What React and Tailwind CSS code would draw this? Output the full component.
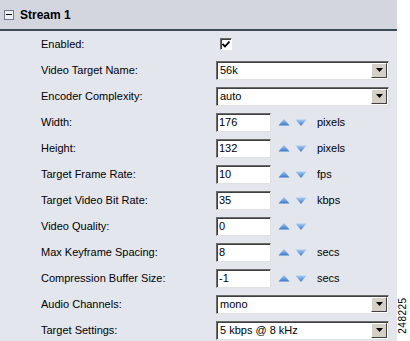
import React from "react";

const ROWS = [
  { label: "Enabled:", type: "check" },
  { label: "Video Target Name:", type: "select", value: "56k" },
  { label: "Encoder Complexity:", type: "select", value: "auto" },
  { label: "Width:", type: "spin", value: "176", unit: "pixels" },
  { label: "Height:", type: "spin", value: "132", unit: "pixels" },
  { label: "Target Frame Rate:", type: "spin", value: "10", unit: "fps" },
  { label: "Target Video Bit Rate:", type: "spin", value: "35", unit: "kbps" },
  { label: "Video Quality:", type: "spin", value: "0", unit: "" },
  { label: "Max Keyframe Spacing:", type: "spin", value: "8", unit: "secs" },
  { label: "Compression Buffer Size:", type: "spin", value: "-1", unit: "secs" },
  { label: "Audio Channels:", type: "select", value: "mono" },
  { label: "Target Settings:", type: "select", value: "5 kbps @ 8 kHz" },
];

function Arrow({ down }) {
  return (
    <svg width="12" height="9" viewBox="0 0 12 9">
      <defs>
        <linearGradient id={down ? "gd" : "gu"} x1="0" y1="0" x2="0" y2="1">
          <stop offset="0" stopColor="#a8ccf4" />
          <stop offset="1" stopColor="#3a78c8" />
        </linearGradient>
      </defs>
      {down ? (
        <path d="M0.5 1.5 H11.5 L6 8 Z" fill="url(#gd)" />
      ) : (
        <path d="M6 1 L11.5 7.5 H0.5 Z" fill="url(#gu)" />
      )}
    </svg>
  );
}

function Select({ value }) {
  return (
    <div className="flex items-center w-[173px] h-[19px] bg-white border border-t-[#6b6b6b] border-l-[#6b6b6b] border-b-[#e0e0e0] border-r-[#e0e0e0] shadow-[inset_1px_1px_0_#404040]">
      <span className="flex-1 pl-[3px] text-[11px] text-black leading-none">{value}</span>
      <div className="mr-[1px] flex items-center justify-center w-[16px] h-[15px] bg-[#d4d0c8] border border-t-white border-l-white border-b-[#404040] border-r-[#404040]">
        <svg width="7" height="4" viewBox="0 0 7 4">
          <path d="M0 0 H7 L3.5 4 Z" fill="#000" />
        </svg>
      </div>
    </div>
  );
}

function Spin({ value, unit }) {
  return (
    <div className="flex items-center">
      <div className="flex items-center w-[55px] h-[19px] bg-white border border-t-[#6b6b6b] border-l-[#6b6b6b] border-b-[#e0e0e0] border-r-[#e0e0e0] shadow-[inset_1px_1px_0_#404040]">
        <span className="pl-[2px] text-[11px] text-black leading-none">{value}</span>
      </div>
      <div className="ml-[7px] flex items-center gap-[5px]">
        <Arrow />
        <Arrow down />
      </div>
      {unit && <span className="ml-[10px] text-[11px] text-black">{unit}</span>}
    </div>
  );
}

function Check() {
  return (
    <div className="ml-[4px] flex items-center justify-center w-[12px] h-[12px] bg-white border border-t-[#6b6b6b] border-l-[#6b6b6b] border-b-white border-r-white shadow-[inset_1px_1px_0_#404040]">
      <svg width="8" height="7" viewBox="0 0 8 7">
        <path d="M0.5 3 L3 5.5 L7.5 0.5" stroke="#000" strokeWidth="1.8" fill="none" />
      </svg>
    </div>
  );
}

export default function App() {
  return (
    <div
      className="relative w-[410px] h-[341px] bg-white overflow-hidden"
      style={{ fontFamily: '"Liberation Sans", Arial, sans-serif' }}
    >
      <div className="w-[397px] h-full bg-[#e4e6ee]">
        {/* Header */}
        <div className="flex items-center h-[31px] bg-[#d3d6df] border-b-2 border-[#3b4b55] pl-[4px]">
          <div className="flex items-center justify-center w-[10px] h-[10px] bg-[#eef0f4] border border-[#6f7a8a]">
            <div className="w-[6px] h-[1px] bg-black" />
          </div>
          <span className="ml-[6px] text-[12px] font-bold text-black">Stream 1</span>
        </div>

        {/* Rows */}
        <div className="flex flex-col">
          {ROWS.map((r) => (
            <div key={r.label} className="flex items-center h-[26px]">
              <span className="w-[216px] pl-[41px] text-[11px] text-black">{r.label}</span>
              {r.type === "check" && <Check />}
              {r.type === "select" && <Select value={r.value} />}
              {r.type === "spin" && <Spin value={r.value} unit={r.unit} />}
            </div>
          ))}
        </div>
      </div>

      <span className="absolute right-[-10px] bottom-[18px] -rotate-90 text-[10px] text-black tracking-[0.5px]">
        248225
      </span>
    </div>
  );
}
